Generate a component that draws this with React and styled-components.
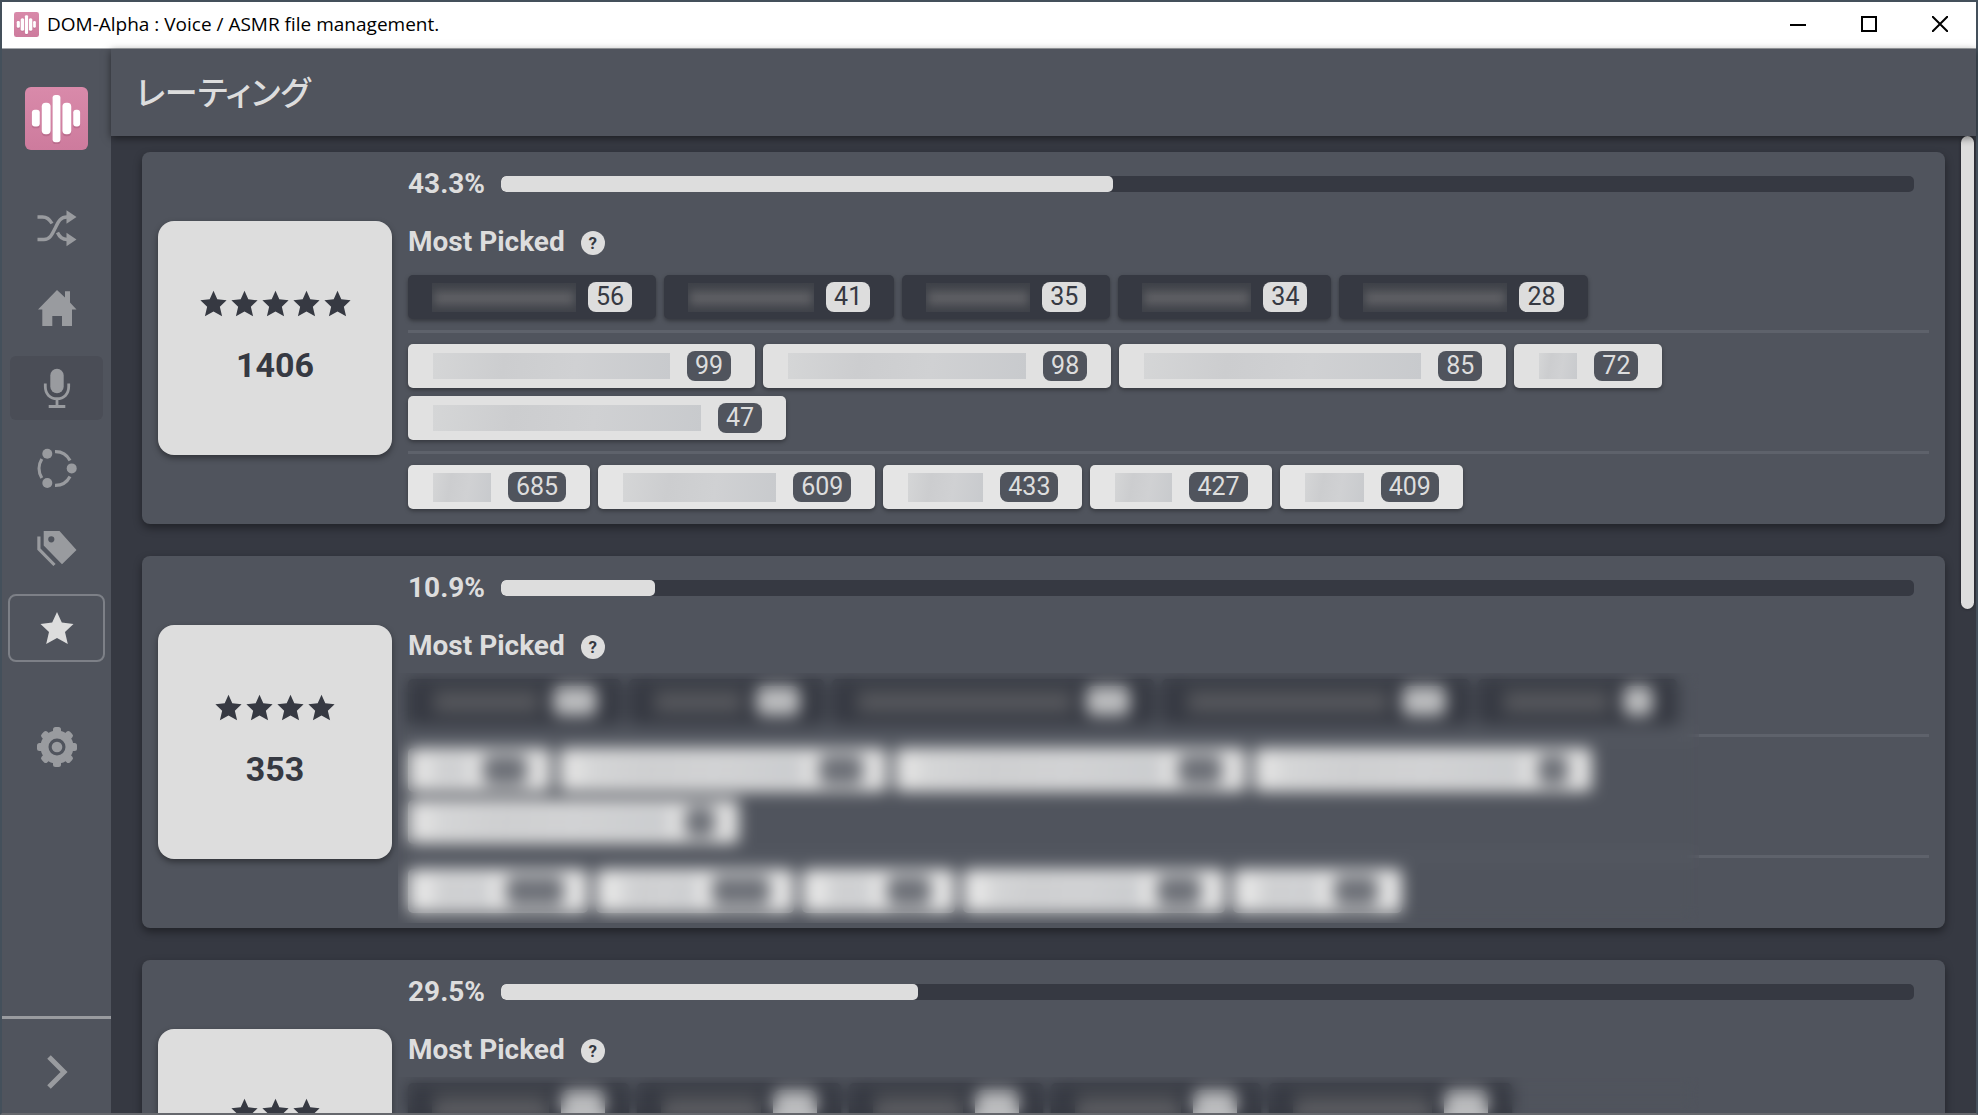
import React, { useState } from 'react'
import styled, { createGlobalStyle, css } from 'styled-components'

const colors = {
  panel: '#50545d',
  base: '#363942',
  light: '#dddddd',
  muted: '#999b9f',
  line: '#5e626b',
}

const GlobalStyle = createGlobalStyle`
  * {
    box-sizing: border-box;
  }
  body {
    margin: 0;
    overflow: hidden;
    font-family: Roboto, "Noto Sans CJK JP", sans-serif;
  }
  button {
    padding: 0;
    border: none;
    background: none;
    color: inherit;
    font: inherit;
    cursor: pointer;
  }
`

const Window = styled.div`
  height: 100vh;
  display: flex;
  flex-direction: column;
  border: 2px solid #44505b;
  border-bottom-color: #66686d;
  background: ${colors.base};
`

const TitleBar = styled.header`
  flex: none;
  height: 47px;
  display: flex;
  align-items: center;
  padding: 0 1px 2px 12px;
  border-bottom: 1px solid #a4a7ab;
  background: #fff;
  color: #000;
`

const TitleText = styled.span`
  flex: 1;
  margin-left: 8px;
  font-family: "Open Sans", sans-serif;
  font-size: 19px;
  line-height: 24px;
`

const WindowButton = styled.button`
  width: 71px;
  height: 44px;
  display: flex;
  align-items: center;
  justify-content: center;
`

const Body = styled.div`
  flex: 1;
  min-height: 0;
  display: flex;
`

const Sidebar = styled.nav`
  flex: none;
  width: 109px;
  display: flex;
  flex-direction: column;
  align-items: center;
  padding-top: 38px;
  background: ${colors.panel};
  color: ${colors.muted};
`

const Menu = styled.div`
  flex: 1;
  display: flex;
  flex-direction: column;
  gap: 12px;
  margin-top: 44px;
`

const MenuButton = styled.button`
  width: 97px;
  height: 68px;
  display: flex;
  align-items: center;
  justify-content: center;
  border: 2px solid transparent;
  border-radius: 8px;
  background-clip: padding-box;

  ${({ $hovered }) => $hovered && css`
    background-color: #4a4d56;
  `}
  ${({ $active }) => $active && css`
    border-color: #7d8087;
    color: ${colors.light};
  `}
  ${({ $spaced }) => $spaced && css`
    margin-top: 39px;
  `}
`

const ExpandButton = styled.button`
  width: 100%;
  height: 97px;
  display: flex;
  align-items: center;
  justify-content: center;
  padding-top: 12px;
  border-top: 3px solid ${colors.muted};
`

const Main = styled.main`
  flex: 1;
  min-width: 0;
  display: flex;
  flex-direction: column;
`

const PageHeader = styled.div`
  flex: none;
  position: relative;
  height: 87px;
  display: flex;
  align-items: center;
  padding: 0 0 3px 25px;
  background: ${colors.panel};
  box-shadow: 0 2px 8px rgba(0, 0, 0, 0.5);
`

const PageTitle = styled.h1`
  margin: 0;
  font-family: "Noto Sans CJK JP", sans-serif;
  font-feature-settings: "palt";
  font-size: 33px;
  font-weight: 500;
  line-height: 48px;
  color: ${colors.light};
`

const Scroller = styled.div`
  flex: 1;
  min-height: 0;
  display: flex;
  overflow: hidden;
`

const CardList = styled.div`
  flex: 1;
  min-width: 0;
  display: flex;
  flex-direction: column;
  gap: 32px;
  padding: 16px 16px 16px 31px;
`

const ScrollTrack = styled.div`
  flex: none;
  width: 13px;
  margin-right: 2px;
`

const ScrollThumb = styled.div`
  height: 48.4%;
  border-radius: 7px;
  background: ${colors.light};
  box-shadow: 0 0 3px rgba(0, 0, 0, 0.5);
`

const Card = styled.section`
  flex: none;
  display: flex;
  align-items: center;
  gap: 16px;
  padding: 16px 16px 15px;
  border-radius: 8px;
  background: ${colors.panel};
  box-shadow: 0 4px 8px rgba(0, 0, 0, 0.4);
`

const ScoreTile = styled.div`
  flex: none;
  width: 234px;
  height: 234px;
  display: flex;
  flex-direction: column;
  align-items: center;
  justify-content: center;
  gap: 28px;
  margin-bottom: 2px;
  border-radius: 16px;
  background: ${colors.light};
  color: ${colors.base};
  box-shadow: 0 3px 6px rgba(0, 0, 0, 0.4);
`

const Stars = styled.div`
  display: flex;
  gap: 4px;
`

const Count = styled.div`
  font-size: 34px;
  font-weight: 700;
  line-height: 40px;
`

const Info = styled.div`
  flex: 1;
  min-width: 0;
  color: ${colors.light};
`

const RateRow = styled.label`
  display: flex;
  align-items: center;
  gap: 16px;
  padding-right: 15px;
  font-size: 28px;
  font-weight: 700;
  line-height: 32px;
`

const RateBar = styled.progress`
  flex: 1;
  height: 16px;
  appearance: none;
  border: none;
  border-radius: 5px;
  overflow: hidden;
  background: ${colors.base};

  &::-webkit-progress-bar {
    background: ${colors.base};
  }
  &::-webkit-progress-value {
    border-radius: 5px;
    background: ${colors.light};
  }
`

const PickedTitle = styled.h2`
  display: flex;
  align-items: center;
  gap: 16px;
  margin: 26px 0 17px;
  font-size: 28px;
  font-weight: 700;
  line-height: 32px;
`

const HelpButton = styled.button`
  width: 24px;
  height: 24px;
  margin-top: 2px;
  border-radius: 50%;
  background: ${colors.light};
  color: ${colors.base};
  font-size: 17px;
  line-height: 24px;
`

const TagGroups = styled.div`
  position: relative;
`

const TagRow = styled.div`
  display: flex;
  flex-wrap: wrap;
  gap: 8px;

  & + & {
    margin-top: 11px;
    padding-top: 11px;
    border-top: 3px solid ${colors.line};
  }
`

const Tag = styled.button`
  height: 44px;
  display: flex;
  align-items: center;
  gap: 12px;
  padding: 0 24px;
  border-radius: 5px;
  background: ${({ $tone }) => ({ dark: colors.base, light: '#e1e1e1', bright: '#e5e5e5' })[$tone]};
  box-shadow: 0 2px 4px rgba(0, 0, 0, 0.35);
`

const HiddenName = styled.span`
  height: ${({ $tone }) => ($tone === 'light' ? 26 : 29)}px;

  ${({ $tone }) => $tone === 'dark' ? css`
    background: linear-gradient(#3f4249, #5b5c61 45%, #5b5c61 60%, #44464d);
    box-shadow: inset 0 0 8px 2px #3f4249;
  ` : css`
    padding: 0 5px 0 1px;
    background: linear-gradient(100deg, #d5d6d7, #cccdcf 30%, #d0d1d3 60%, #c8cacd) content-box;
  `}
`

const Badge = styled.span`
  min-width: ${({ $digits }) => 16 + $digits * 14}px;
  height: 30px;
  padding: 0 8px;
  border-radius: 8px;
  background: ${({ $tone }) => ($tone === 'dark' ? colors.light : colors.panel)};
  color: ${({ $tone }) => ($tone === 'dark' ? colors.base : colors.light)};
  font-size: 25px;
  line-height: 30px;
  text-align: center;

  &:empty {
    opacity: 0.8;
  }
`

// frosted cover over the tags of a private group
const Frost = styled.div`
  position: absolute;
  top: -6px;
  right: 230px;
  bottom: -10px;
  left: -10px;
  backdrop-filter: blur(8px);
`

const LogoTile = ({ size }) => (
  <svg width={size} height={size} viewBox="0 0 64 64" aria-hidden="true">
    <defs>
      <linearGradient id="logoPink" x1="0" y1="0" x2="0" y2="1">
        <stop offset="0" stopColor="#d98aaa" />
        <stop offset="1" stopColor="#cd7b9d" />
      </linearGradient>
    </defs>
    <rect width="64" height="64" rx="6" fill="url(#logoPink)" />
    <g fill="#a95f7e" opacity="0.5" transform="translate(0 2)">
      <rect x="7" y="23" width="8" height="17" rx="3" />
      <rect x="17" y="16" width="9" height="32" rx="4" />
      <rect x="28" y="8" width="8" height="48" rx="3" />
      <rect x="38" y="16" width="9" height="32" rx="4" />
      <rect x="49" y="23" width="7" height="17" rx="3" />
    </g>
    <g fill="#fff">
      <rect x="7" y="23" width="8" height="17" rx="3" />
      <rect x="17" y="16" width="9" height="32" rx="4" />
      <rect x="28" y="8" width="8" height="48" rx="3" />
      <rect x="38" y="16" width="9" height="32" rx="4" />
      <rect x="49" y="23" width="7" height="17" rx="3" />
    </g>
  </svg>
)

const Icon = ({ children, size = 40 }) => (
  <svg width={size} height={size} viewBox="0 0 40 40" fill="currentColor" aria-hidden="true">
    {children}
  </svg>
)

const ShuffleIcon = () => (
  <Icon>
    <g fill="none" stroke="currentColor" strokeWidth="3.4">
      <path d="M0.5 31.5H7C13 31.5 15 26.5 18 20.5S23 9 30 9" />
      <path d="M0.5 9H5.5C10 9 12.5 11 15 15.5" />
      <path d="M20.5 24.5C22.5 29 25.5 31.5 30 31.5" />
    </g>
    <path d="M29.5 2.3L39.5 9L29.5 15.7ZM29.5 24.8L39.5 31.5L29.5 38.3Z" />
  </Icon>
)

const HomeIcon = () => (
  <Icon>
    <path d="M20 2L28 9.5V3.3H33V14.5L39.5 21.6H35V38H25V28H15.3V38H5.3V21.6H1Z" />
  </Icon>
)

const MicIcon = () => (
  <Icon>
    <rect x="13.3" y="0.8" width="13.4" height="24.5" rx="6.7" />
    <path
      d="M8.3 15.5V18.5C8.3 26 13 30.7 20 30.7S31.7 26 31.7 18.5V15.5M20 30.7V38"
      fill="none"
      stroke="currentColor"
      strokeWidth="2.8"
    />
    <rect x="11.7" y="37" width="16.6" height="3" />
  </Icon>
)

const RingIcon = () => (
  <Icon>
    <g fill="none" stroke="currentColor" strokeWidth="3.2">
      <path d="M18 3.6A16.5 16.5 0 0 1 33 12.5" />
      <path d="M33 28.5A16.5 16.5 0 0 1 18 37.4" />
      <path d="M4.8 11A18 18 0 0 0 4.8 30" />
    </g>
    <circle cx="10.3" cy="5.8" r="5" />
    <circle cx="34.7" cy="20.4" r="5" />
    <circle cx="10.3" cy="35" r="5" />
  </Icon>
)

const TagsIcon = () => (
  <Icon>
    <path
      fillRule="evenodd"
      d="M6.7 3H22.5L39.5 22L25 36.3L6.7 17.5ZM14.3 8.2A3.1 3.1 0 1 0 14.3 14.4A3.1 3.1 0 1 0 14.3 8.2Z"
    />
    <path d="M1.9 8.5V21L17.5 37" fill="none" stroke="currentColor" strokeWidth="3.2" />
  </Icon>
)

const starPath = 'M20 4L24.8 14.6L36.5 16L28 24L30.8 36L20 30L9.2 36L12 24L3.5 16L15.2 14.6Z'

const StarIcon = () => <Icon><path d={starPath} /></Icon>

const GearIcon = () => (
  <Icon>
    <circle cx="20" cy="20" r="12.5" fill="none" stroke="currentColor" strokeWidth="8" />
    <circle cx="20" cy="20" r="5.3" />
    {[0, 45, 90, 135, 180, 225, 270, 315].map(angle => (
      <rect key={angle} x="16" y="0" width="8" height="9" rx="2.5" transform={`rotate(${angle} 20 20)`} />
    ))}
  </Icon>
)

const ChevronIcon = () => (
  <Icon>
    <path d="M12 5L27 20L12 35" fill="none" stroke="currentColor" strokeWidth="5" />
  </Icon>
)

const menu = [
  { id: 'shuffle', label: 'Shuffle', icon: ShuffleIcon },
  { id: 'home', label: 'Home', icon: HomeIcon },
  { id: 'voice', label: 'Voice', icon: MicIcon, hovered: true },
  { id: 'circle', label: 'Circle', icon: RingIcon },
  { id: 'tags', label: 'Tags', icon: TagsIcon },
  { id: 'rating', label: 'Rating', icon: StarIcon },
  { id: 'settings', label: 'Settings', icon: GearIcon, spaced: true },
]

// every tag is [name width, count]; tags of a private group only keep the digits of the count
const ratings = [
  {
    stars: 5,
    count: 1406,
    rate: 43.3,
    rows: [
      [[144, 56], [126, 41], [104, 35], [109, 34], [144, 28]],
      [[243, 99], [244, 98], [283, 85], [44, 72], [274, 47]],
      [[64, 685], [159, 609], [81, 433], [63, 427], [65, 409]],
    ],
  },
  {
    stars: 4,
    count: 353,
    rate: 10.9,
    hidden: true,
    rows: [
      [[109, 2], [91, 2], [218, 2], [204, 2], [109, 1]],
      [[39, 2], [224, 2], [247, 2], [248, 1], [241, 1]],
      [[62, 3], [80, 3], [49, 2], [158, 2], [65, 2]],
    ],
  },
  {
    stars: 3,
    rate: 29.5,
    hidden: true,
    rows: [
      [[117, 2], [100, 2], [90, 2], [106, 2], [139, 2]],
      [[39, 2], [224, 2], [247, 2], [248, 1], [241, 1]],
      [[62, 3], [80, 3], [49, 2], [158, 2], [65, 2]],
    ],
  },
]

const tones = ['dark', 'light', 'bright']

function RatingCard({ rating }) {
  const { stars, count, rate, rows, hidden } = rating

  return (
    <Card>
      <ScoreTile>
        <Stars>
          {Array.from({ length: stars }, (_, i) => (
            <svg key={i} width="27" height="27" viewBox="3 3 34 34" fill="currentColor" aria-hidden="true">
              <path d={starPath} />
            </svg>
          ))}
        </Stars>
        <Count>{count || '\u00a0'}</Count>
      </ScoreTile>
      <Info>
        <RateRow>
          {rate.toFixed(1)}%
          <RateBar max="100" value={rate} />
        </RateRow>
        <PickedTitle>
          Most Picked
          <HelpButton aria-label="Help">?</HelpButton>
        </PickedTitle>
        <TagGroups>
          {rows.map((row, r) => (
            <TagRow key={r}>
              {row.map(([width, value], i) => (
                <Tag key={i} $tone={tones[r]}>
                  <HiddenName $tone={tones[r]} style={{ width }} />
                  <Badge $tone={tones[r]} $digits={hidden ? value : String(value).length}>
                    {hidden ? null : value}
                  </Badge>
                </Tag>
              ))}
            </TagRow>
          ))}
          {hidden && <Frost />}
        </TagGroups>
      </Info>
    </Card>
  )
}

export default function App() {
  const [page, setPage] = useState('rating')

  return (
    <Window>
      <GlobalStyle />
      <TitleBar>
        <LogoTile size={25} />
        <TitleText>DOM-Alpha : Voice / ASMR file management.</TitleText>
        <WindowButton aria-label="Minimize">
          <svg width="16" height="16" stroke="#000" strokeWidth="2"><path d="M0 9H16" /></svg>
        </WindowButton>
        <WindowButton aria-label="Maximize">
          <svg width="16" height="16" stroke="#000" strokeWidth="2" fill="none"><path d="M1 1H15V15H1Z" /></svg>
        </WindowButton>
        <WindowButton aria-label="Close">
          <svg width="16" height="16" stroke="#000" strokeWidth="2"><path d="M0 0L16 16M16 0L0 16" /></svg>
        </WindowButton>
      </TitleBar>
      <Body>
        <Sidebar>
          <LogoTile size={63} />
          <Menu>
            {menu.map(({ id, label, icon: ItemIcon, hovered, spaced }) => (
              <MenuButton
                key={id}
                aria-label={label}
                $active={page === id}
                $hovered={hovered}
                $spaced={spaced}
                onClick={() => setPage(id)}
              >
                <ItemIcon />
              </MenuButton>
            ))}
          </Menu>
          <ExpandButton aria-label="Expand">
            <ChevronIcon />
          </ExpandButton>
        </Sidebar>
        <Main>
          <PageHeader>
            <PageTitle>レーティング</PageTitle>
          </PageHeader>
          <Scroller>
            <CardList>
              {ratings.map(rating => <RatingCard key={rating.stars} rating={rating} />)}
            </CardList>
            <ScrollTrack>
              <ScrollThumb />
            </ScrollTrack>
          </Scroller>
        </Main>
      </Body>
    </Window>
  )
}
